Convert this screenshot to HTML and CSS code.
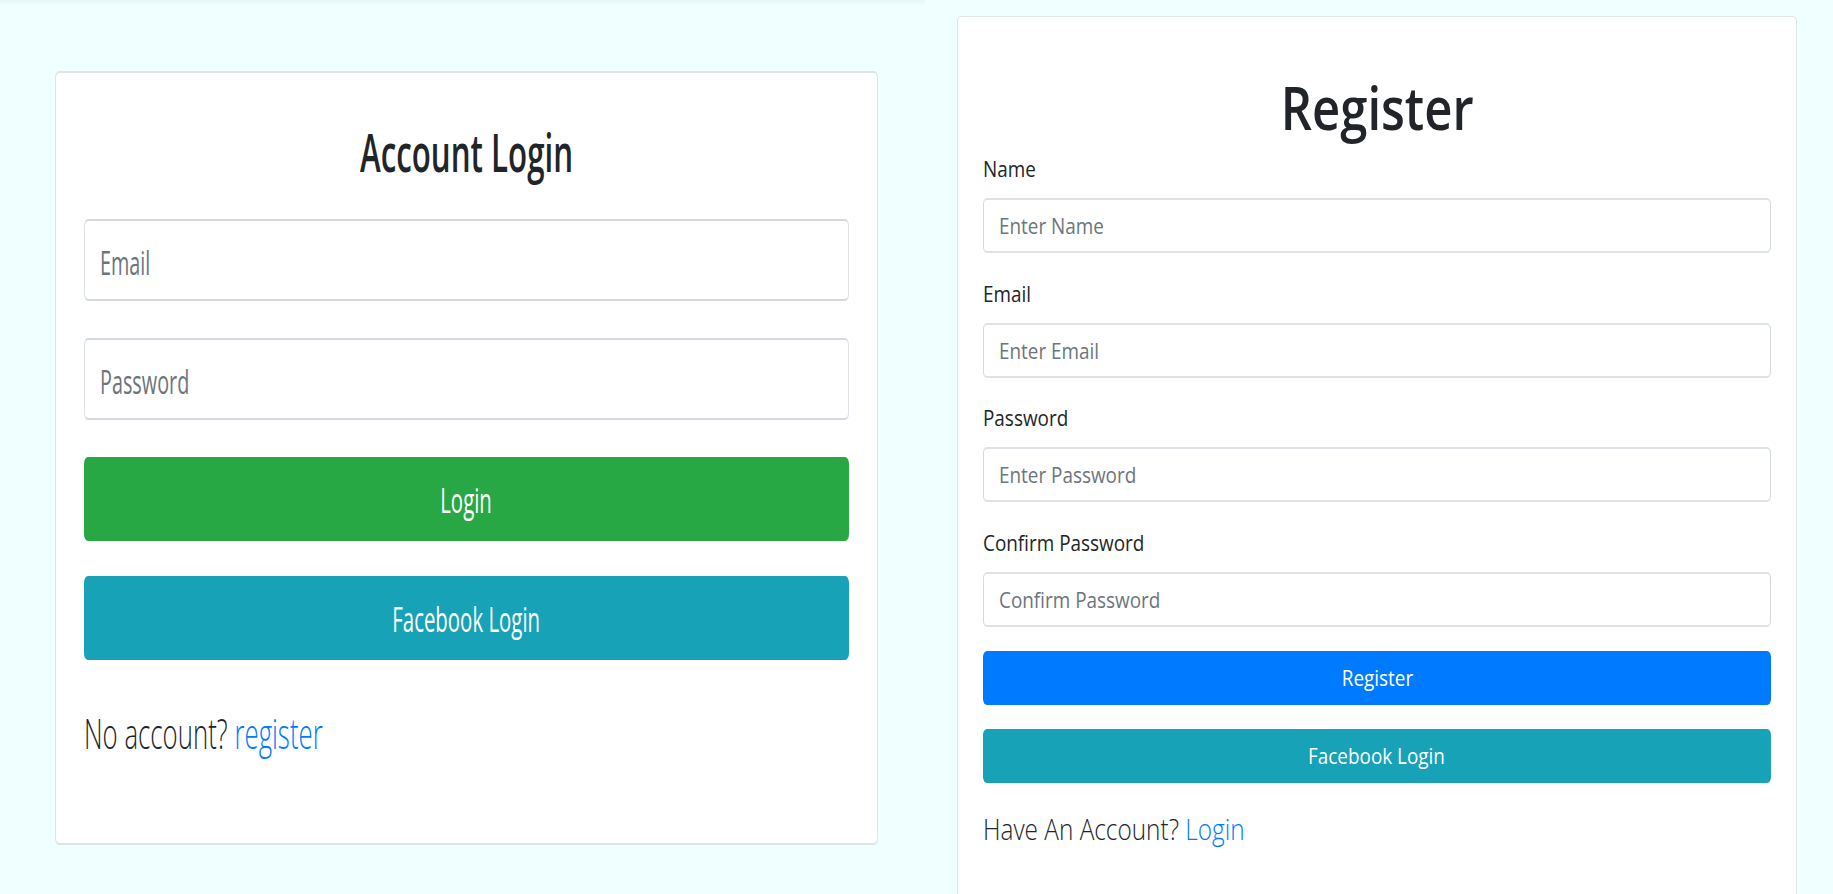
FILE: index.html
```html
<!DOCTYPE html>
<html lang="en">
<head>
<meta charset="utf-8">
<title>Account Login / Register</title>
<link rel="stylesheet" href="styles.css">
</head>
<body>
<div class="page">
  <section class="pane pane-login">
    <div class="card card-login">
      <h3 class="login-title"><span class="sq sq-c">Account Login</span></h3>
      <div class="field field-lg field-gap"><span class="sq">Email</span></div>
      <div class="field field-lg field-gap"><span class="sq">Password</span></div>
      <button class="btn btn-lg btn-success btn-gap-l" type="button"><span class="sq sq-c">Login</span></button>
      <button class="btn btn-lg btn-info" type="button"><span class="sq sq-c">Facebook Login</span></button>
      <p class="login-foot"><span class="sq">No account? <a href="#">register</a></span></p>
    </div>
  </section>
  <section class="pane pane-register">
    <div class="card card-register">
      <h1 class="reg-title"><span class="sq sq-c">Register</span></h1>
      <div class="group">
        <label class="lbl"><span class="sq">Name</span></label>
        <div class="field field-md"><span class="sq">Enter Name</span></div>
      </div>
      <div class="group">
        <label class="lbl"><span class="sq">Email</span></label>
        <div class="field field-md"><span class="sq">Enter Email</span></div>
      </div>
      <div class="group">
        <label class="lbl"><span class="sq">Password</span></label>
        <div class="field field-md"><span class="sq">Enter Password</span></div>
      </div>
      <div class="group group-last">
        <label class="lbl"><span class="sq">Confirm Password</span></label>
        <div class="field field-md"><span class="sq">Confirm Password</span></div>
      </div>
      <button class="btn btn-md btn-primary btn-gap-r" type="button"><span class="sq sq-c">Register</span></button>
      <button class="btn btn-md btn-info" type="button"><span class="sq sq-c">Facebook Login</span></button>
      <p class="reg-foot"><span class="sq">Have An Account? <a href="#">Login</a></span></p>
    </div>
  </section>
</div>
</body>
</html>
```

FILE: styles.css
```css
* { box-sizing: border-box; }

html, body {
  margin: 0;
  height: 100%;
  overflow: hidden;
}

body {
  background: #f0ffff;
  font-family: "Open Sans", "Noto Sans", sans-serif;
  color: #212529;
}

.page {
  display: flex;
  height: 100%;
}

/* squeezed text, as in the reference capture */
.sq {
  display: inline-block;
  white-space: nowrap;
  transform: scaleX(var(--sx));
  transform-origin: 0 50%;
}
.sq-c { transform-origin: 50% 50%; }

a { color: #007bff; text-decoration: none; }

.card { background: #fff; }

.btn {
  display: flex;
  align-items: center;
  justify-content: center;
  width: 100%;
  border: 0;
  margin: 0;
  color: #fff;
  font: inherit;
  cursor: pointer;
}
.btn-success { background: #28a745; }
.btn-info { background: #17a2b8; }
.btn-primary { background: #007bff; }

.field {
  display: flex;
  align-items: center;
  background: #fff;
  color: #6c757d;
}

/* ---------- left: login ---------- */
.pane-login {
  --sx: .6;
  flex: 0 0 925px;
  padding: 71px 0 0 55px;
  background: linear-gradient(#e6f6f6, #f0ffff 6px);
}

.card-login {
  width: 823px;
  display: flex;
  flex-direction: column;
  padding: 47px 28px 84px;
  border: 1px solid #dfe5e5;
  border-top-width: 2px;
  border-bottom-width: 2px;
  border-radius: 4px / 7px;
}

.login-title {
  --sx: .59;
  margin: 0 0 35px;
  font-size: 53px;
  line-height: 64px;
  font-weight: 600;
  text-align: center;
}

.field-lg {
  height: 82px;
  padding: 6px 15px 0;
  border: 1px solid #dde2e6;
  border-top: 2px solid #d3d9de;
  border-bottom: 2px solid #d3d9de;
  border-radius: 4px / 7px;
  font-size: 33px;
  line-height: 40px;
}
.field-gap { margin-bottom: 37px; }

.btn-lg {
  height: 84px;
  padding-top: 3px;
  border-radius: 4px / 7px;
  font-size: 34px;
  line-height: 40px;
}
.btn-gap-l { margin-bottom: 35px; }

.login-foot {
  margin: 47px 0 0;
  font-size: 43px;
  line-height: 52px;
  font-weight: 300;
}

/* ---------- right: register ---------- */
.pane-register {
  --sx: .84;
  flex: 1;
  padding: 16px 0 0 32px;
}

.card-register {
  width: 840px;
  display: flex;
  flex-direction: column;
  padding: 55px 25px 60px;
  border: 1px solid #dfe6e8;
  border-radius: 4px / 6px;
}

.reg-title {
  --sx: .83;
  margin: 0 0 9px;
  font-size: 59px;
  line-height: 70px;
  font-weight: 600;
  text-align: center;
}

.group { margin-bottom: 22.5px; }
.group-last { margin-bottom: 24px; }

.lbl {
  display: block;
  margin-bottom: 12px;
  font-size: 22.5px;
  line-height: 35px;
}

.field-md {
  height: 55px;
  padding: 0 15px;
  border: 1px solid #d3d9de;
  border-top: 2px solid #dde2e6;
  border-bottom: 2px solid #dde2e6;
  border-radius: 4px / 6px;
  font-size: 22.5px;
  line-height: 35px;
}

.btn-md {
  height: 54px;
  border-radius: 4px / 6px;
  font-size: 22.5px;
  line-height: 35px;
}
.btn-gap-r { margin-bottom: 24px; }

.reg-foot {
  margin: 24.5px 0 0;
  font-size: 29px;
  line-height: 43.5px;
  font-weight: 300;
}
```
